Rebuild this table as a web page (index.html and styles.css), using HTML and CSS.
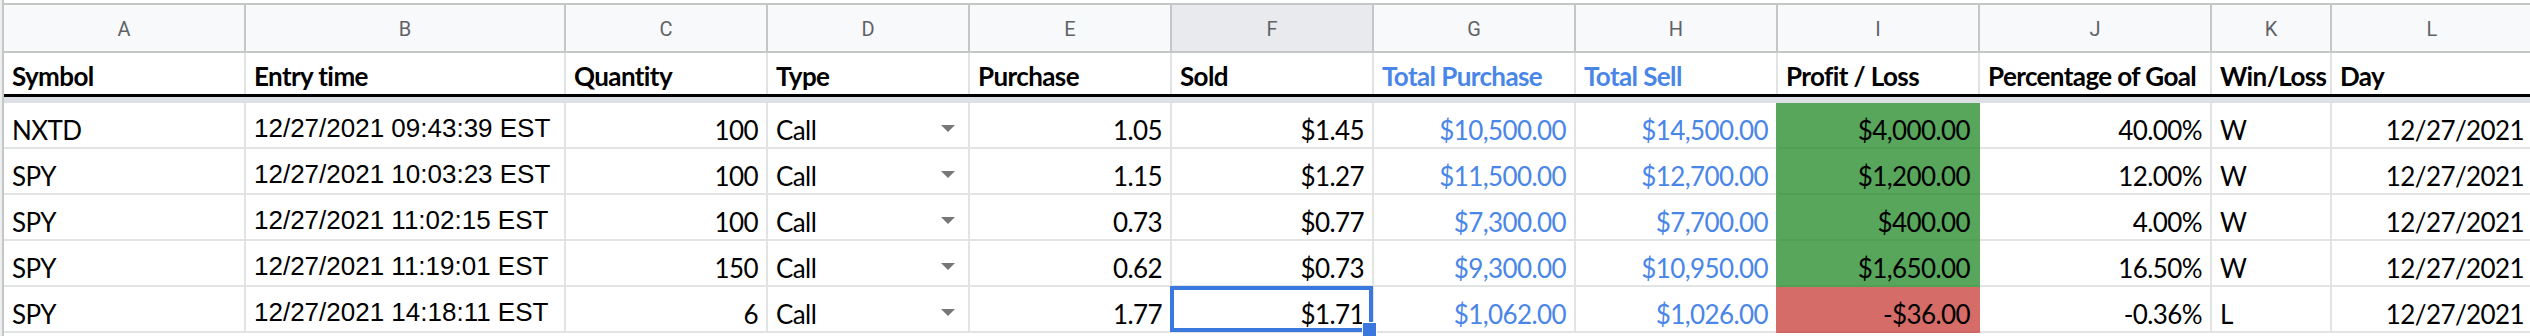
FILE: index.html
```html
<!DOCTYPE html>
<html>
<head>
<meta charset="utf-8">
<link rel="stylesheet" href="styles.css">
</head>
<body>
<div class="sheet">
  <div class="rowhdr"></div>
  <div class="grid">
    <div class="row colhead">
      <div class="ch">A</div><div class="ch">B</div><div class="ch">C</div><div class="ch">D</div>
      <div class="ch">E</div><div class="ch sel">F</div><div class="ch">G</div><div class="ch">H</div>
      <div class="ch">I</div><div class="ch">J</div><div class="ch">K</div><div class="ch">L</div>
    </div>
    <div class="row head">
      <div class="c">Symbol</div><div class="c">Entry time</div><div class="c">Quantity</div><div class="c">Type</div>
      <div class="c">Purchase</div><div class="c">Sold</div><div class="c blue">Total Purchase</div><div class="c blue">Total Sell</div>
      <div class="c">Profit / Loss</div><div class="c">Percentage of Goal</div><div class="c">Win/Loss</div><div class="c">Day</div>
    </div>
    <div class="freeze"></div>

    <div class="row data">
      <div class="c">NXTD</div><div class="c arial">12/27/2021 09:43:39 EST</div><div class="c r">100</div>
      <div class="c dd"><span>Call</span><i class="arrow"></i></div>
      <div class="c r">1.05</div><div class="c r">$1.45</div><div class="c r blue">$10,500.00</div><div class="c r blue">$14,500.00</div>
      <div class="c r win">$4,000.00</div><div class="c r">40.00%</div><div class="c">W</div><div class="c r">12/27/2021</div>
    </div>
    <div class="row data">
      <div class="c">SPY</div><div class="c arial">12/27/2021 10:03:23 EST</div><div class="c r">100</div>
      <div class="c dd"><span>Call</span><i class="arrow"></i></div>
      <div class="c r">1.15</div><div class="c r">$1.27</div><div class="c r blue">$11,500.00</div><div class="c r blue">$12,700.00</div>
      <div class="c r win">$1,200.00</div><div class="c r">12.00%</div><div class="c">W</div><div class="c r">12/27/2021</div>
    </div>
    <div class="row data">
      <div class="c">SPY</div><div class="c arial">12/27/2021 11:02:15 EST</div><div class="c r">100</div>
      <div class="c dd"><span>Call</span><i class="arrow"></i></div>
      <div class="c r">0.73</div><div class="c r">$0.77</div><div class="c r blue">$7,300.00</div><div class="c r blue">$7,700.00</div>
      <div class="c r win">$400.00</div><div class="c r">4.00%</div><div class="c">W</div><div class="c r">12/27/2021</div>
    </div>
    <div class="row data">
      <div class="c">SPY</div><div class="c arial">12/27/2021 11:19:01 EST</div><div class="c r">150</div>
      <div class="c dd"><span>Call</span><i class="arrow"></i></div>
      <div class="c r">0.62</div><div class="c r">$0.73</div><div class="c r blue">$9,300.00</div><div class="c r blue">$10,950.00</div>
      <div class="c r win">$1,650.00</div><div class="c r">16.50%</div><div class="c">W</div><div class="c r">12/27/2021</div>
    </div>
    <div class="row data">
      <div class="c">SPY</div><div class="c arial">12/27/2021 14:18:11 EST</div><div class="c r">6</div>
      <div class="c dd"><span>Call</span><i class="arrow"></i></div>
      <div class="c r">1.77</div><div class="c r selcell">$1.71</div><div class="c r blue">$1,062.00</div><div class="c r blue">$1,026.00</div>
      <div class="c r loss">-$36.00</div><div class="c r">-0.36%</div><div class="c">L</div><div class="c r">12/27/2021</div>
    </div>
  </div>
</div>
</body>
</html>
```

FILE: styles.css
```css
* {
  box-sizing: border-box;
  margin: 0;
  padding: 0;
}

html, body {
  width: 2530px;
  height: 336px;
  overflow: hidden;
  background: #ffffff;
}

body {
  font-family: Lato, "Open Sans", sans-serif;
  font-size: 26px;
  color: #000;
}

.sheet {
  display: flex;
  align-items: flex-start;
}

.rowhdr {
  flex: 0 0 4px;
  height: 336px;
  background: #eceef0;
  border-right: 2px solid #c4c7c5;
}

.grid {
  flex: 0 0 auto;
  padding-top: 3px;
}

.row {
  display: grid;
  grid-template-columns: 242px 320px 202px 202px 202px 202px 202px 202px 202px 232px 120px 202px;
}

/* column letter header */
.colhead {
  height: 50px;
  background: #f8f9fa;
  border-top: 2px solid #c4c7c5;
  border-bottom: 2px solid #c4c7c5;
}

.ch {
  display: flex;
  align-items: center;
  justify-content: center;
  border-right: 2px solid #c4c7c5;
  font-family: Roboto, "Liberation Sans", sans-serif;
  font-size: 20px;
  color: #5f6368;
  padding-top: 1px;
}

.ch.sel {
  background: #e8eaed;
}

/* field header row */
.head {
  height: 44px;
  border-bottom: 3px solid #000;
}

.head .c {
  font-weight: 700;
  border-bottom: none;
  padding-bottom: 5px;
}

.freeze {
  height: 6px;
  background: #dde1e6;
}

.c {
  display: flex;
  align-items: flex-end;
  padding: 0 8px 4px 8px;
  border-right: 2px solid #e2e3e3;
  border-bottom: 2px solid #e2e3e3;
  line-height: 26px;
  letter-spacing: -0.6px;
  white-space: nowrap;
}

.data {
  height: 46px;
}

.r {
  justify-content: flex-end;
}

.blue {
  color: #4a86e8;
}

.arial {
  font-family: "Liberation Sans", Arial, sans-serif;
  letter-spacing: 0;
  padding-bottom: 6px;
}

.dd {
  justify-content: space-between;
}

.arrow {
  align-self: center;
  margin-top: 10px;
  margin-right: 5px;
  width: 0;
  height: 0;
  border-left: 7px solid transparent;
  border-right: 7px solid transparent;
  border-top: 7px solid #777;
}

.win {
  background: #57a65b;
  border-right-color: #57a65b;
  border-bottom-color: #50a054;
  box-shadow: -2px 0 0 #57a65b;
}

.loss {
  background: #d56c67;
  border-right-color: #d56c67;
  border-bottom-color: #cf6661;
  box-shadow: -2px 0 0 #d56c67;
}

.selcell {
  position: relative;
}

.selcell::before {
  content: "";
  position: absolute;
  left: -2px;
  top: -1px;
  right: -1px;
  bottom: -1px;
  border: 4px solid #3a77de;
}

.selcell::after {
  content: "";
  position: absolute;
  right: -5px;
  bottom: -6px;
  width: 13px;
  height: 13px;
  background: #3a77de;
  border: 1px solid #fff;
}
```
